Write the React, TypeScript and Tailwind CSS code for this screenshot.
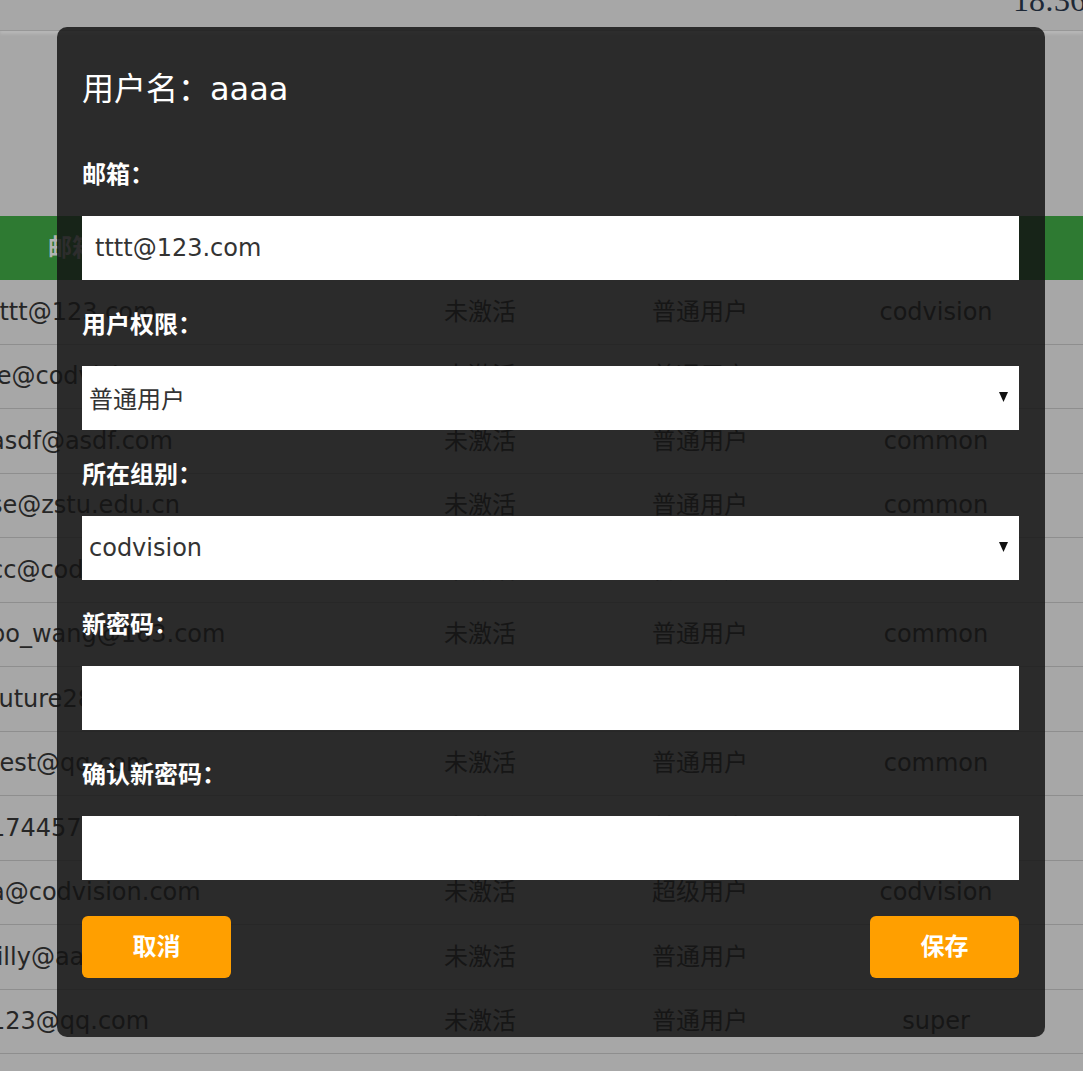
import React from "react";

type Row = {
  email: string;
  status: string;
  role: string;
  group: string;
};

// table rows behind the dialog
const rows: Row[] = [
  { email: "tttt@123.com", status: "未激活", role: "普通用户", group: "codvision" },
  { email: "le@codvision.com", status: "未激活", role: "普通用户", group: "common" },
  { email: "asdf@asdf.com", status: "未激活", role: "普通用户", group: "common" },
  { email: "se@zstu.edu.cn", status: "未激活", role: "普通用户", group: "common" },
  { email: "cc@codvision.com", status: "未激活", role: "普通用户", group: "codvision" },
  { email: "bo_wang@163.com", status: "未激活", role: "普通用户", group: "common" },
  { email: "future28@163.com", status: "未激活", role: "普通用户", group: "common" },
  { email: "test@qq.com", status: "未激活", role: "普通用户", group: "common" },
  { email: "1744574@qq.com", status: "未激活", role: "普通用户", group: "common" },
  { email: "a@codvision.com", status: "未激活", role: "超级用户", group: "codvision" },
  { email: "lilly@aa.com", status: "未激活", role: "普通用户", group: "common" },
  { email: "123@qq.com", status: "未激活", role: "普通用户", group: "super" },
];

function Arrow() {
  return (
    <svg
      className="pointer-events-none absolute right-[11px] top-[26px]"
      width="9"
      height="10"
      viewBox="0 0 9 10"
    >
      <polygon points="0,0 9,0 4.5,10" fill="#111" />
    </svg>
  );
}

function Field({ label, children }: { label: string; children: React.ReactNode }) {
  return (
    <div className="flex flex-col">
      <label className="text-[24px] leading-[32px] font-bold text-white">{label}</label>
      <div className="relative mt-[25px]">{children}</div>
    </div>
  );
}

export default function App() {
  return (
    <div className="relative h-[1071px] w-full overflow-hidden bg-[#a7a7a7] font-['DejaVu_Sans','Noto_Sans_CJK_SC',sans-serif] text-[#262626]">
      {/* top bar */}
      <div className="flex h-[31px] border-b border-[#979797] pl-[1013px] shadow-[0_3px_3px_rgba(255,255,255,0.18)]">
        <span className="-mt-[16px] whitespace-nowrap font-['Liberation_Serif',serif] text-[32px] leading-none text-[#1d2836]">
          18:36
        </span>
      </div>

      {/* user table */}
      <div className="-ml-[10px] mt-[185px] w-[1100px]">
        <div className="grid h-[64px] grid-cols-[380px_220px_220px_252px_1fr] items-center bg-[#2e7a32] text-[24px] font-bold text-[#b3b3b3]">
          <div className="pl-[58px]">邮箱</div>
          <div className="text-center">状态</div>
          <div className="text-center">权限</div>
          <div className="text-center">组别</div>
          <div />
        </div>
        {rows.map((r) => (
          <div
            key={r.email}
            className="grid h-[64.5px] grid-cols-[380px_220px_220px_252px_1fr] items-center border-b border-[#8e8e8e] text-[24px]"
          >
            <div className="whitespace-nowrap">{r.email}</div>
            <div className="text-center">{r.status}</div>
            <div className="text-center">{r.role}</div>
            <div className="text-center">{r.group}</div>
            <div />
          </div>
        ))}
      </div>

      {/* edit dialog */}
      <div className="absolute inset-0">
        <div className="ml-[57px] mt-[27px] w-[988px] rounded-[10px] bg-[rgba(19,19,19,0.84)] pb-[59px] pl-[25px] pr-[26px] pt-[40px]">
          <h2 className="text-[32px] leading-[44px] text-white">用户名：aaaa</h2>

          <div className="mt-[48px] flex flex-col gap-[29px]">
            <Field label="邮箱：">
              <input
                defaultValue="tttt@123.com"
                className="h-[64px] w-full bg-white px-[13px] text-[24px] text-[#333] outline-none"
              />
            </Field>
            <Field label="用户权限：">
              <select
                defaultValue="普通用户"
                className="h-[64px] w-full appearance-none rounded-none bg-white pl-[7px] pt-[4px] text-[24px] text-[#333] outline-none"
              >
                <option>普通用户</option>
                <option>超级用户</option>
              </select>
              <Arrow />
            </Field>
            <Field label="所在组别：">
              <select
                defaultValue="codvision"
                className="h-[64px] w-full appearance-none rounded-none bg-white pl-[7px] text-[24px] text-[#333] outline-none"
              >
                <option>codvision</option>
                <option>common</option>
                <option>super</option>
              </select>
              <Arrow />
            </Field>
            <Field label="新密码：">
              <input type="password" className="h-[64px] w-full bg-white px-[13px] text-[24px] outline-none" />
            </Field>
            <Field label="确认新密码：">
              <input type="password" className="h-[64px] w-full bg-white px-[13px] text-[24px] outline-none" />
            </Field>
          </div>

          <div className="mt-[36px] flex justify-between">
            <button className="h-[62px] w-[149px] rounded-[6px] bg-[#ff9f00] text-[24px] font-bold text-white">
              取消
            </button>
            <button className="h-[62px] w-[149px] rounded-[6px] bg-[#ff9f00] text-[24px] font-bold text-white">
              保存
            </button>
          </div>
        </div>
      </div>
    </div>
  );
}
